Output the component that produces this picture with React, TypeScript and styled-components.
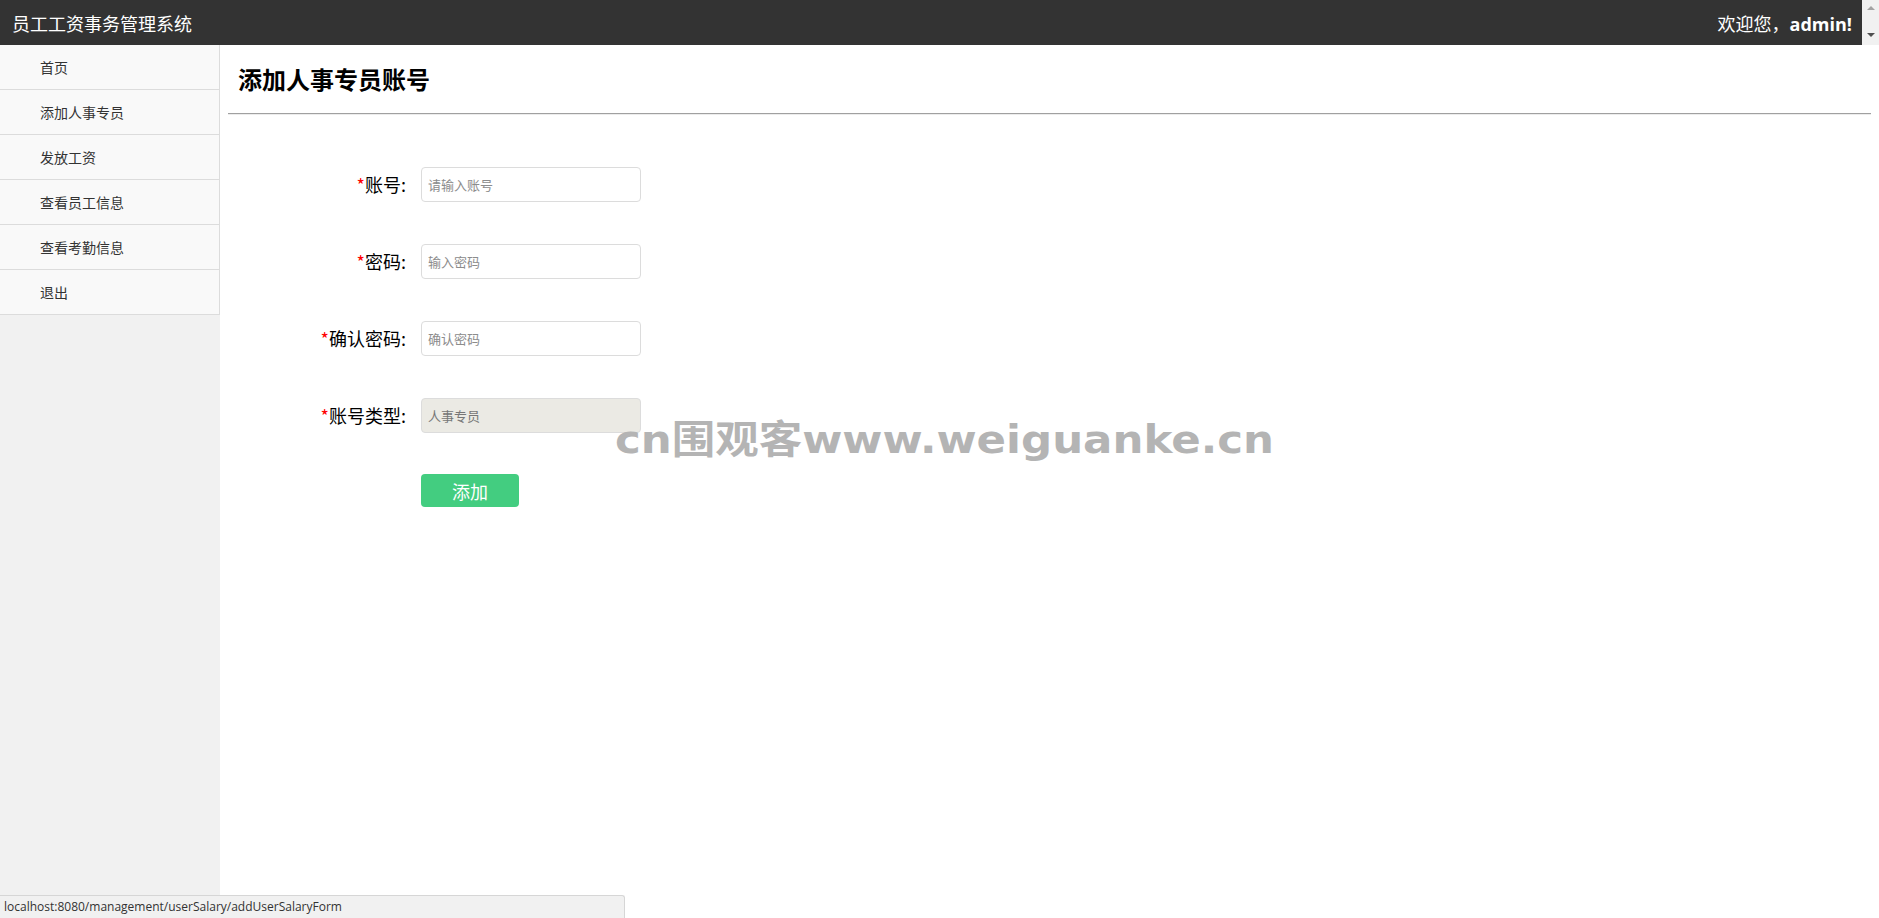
import React from "react";
import styled, { createGlobalStyle } from "styled-components";

const Global = createGlobalStyle`
  html, body { margin: 0; padding: 0; }
  body {
    font-family: "Noto Sans CJK SC", "Noto Sans", sans-serif;
    background: #fff;
    overflow: hidden;
  }
  #root { width: 1879px; height: 918px; }
`;

const Page = styled.div`
  position: relative;
  width: 1879px;
  height: 918px;
  display: grid;
  grid-template-rows: 45px 1fr;
  overflow: hidden;
`;

const Header = styled.header`
  display: flex;
  background: #333;
  height: 45px;
`;

const HeaderInner = styled.div`
  flex: 1;
  display: flex;
  align-items: center;
  justify-content: space-between;
  padding: 0 10px 0 12px;
  color: #fff;
  font-size: 18px;
`;

const Brand = styled.div`
  letter-spacing: 0;
`;

const Welcome = styled.div`
  b { font-weight: 700; font-family: "Open Sans", "Noto Sans CJK SC", sans-serif; }
`;

const ScrollBar = styled.div`
  width: 17px;
  background: #f1f1f1;
  display: flex;
  flex-direction: column;
  justify-content: space-between;
  align-items: center;
  padding: 6px 0 8px;
  box-sizing: border-box;
`;

const Arrow = styled.span<{ $up?: boolean; $color: string }>`
  width: 0;
  height: 0;
  border-left: 4px solid transparent;
  border-right: 4px solid transparent;
  ${(p) =>
    p.$up
      ? `border-bottom: 4px solid ${p.$color};`
      : `border-top: 4px solid ${p.$color};`}
`;

const Body = styled.div`
  display: grid;
  grid-template-columns: 220px 1fr;
  min-height: 0;
`;

const Sidebar = styled.nav`
  background: #f1f1f1;
  display: flex;
  flex-direction: column;
`;

const NavItem = styled.a`
  display: flex;
  align-items: center;
  height: 44px;
  padding-left: 40px;
  background: #f9f9f9;
  border-bottom: 1px solid #dcdcdc;
  border-right: 1px solid #dcdcdc;
  color: #333;
  font-size: 14px;
  text-decoration: none;
  cursor: pointer;
`;

const Main = styled.main`
  padding: 0 8px;
  background: #fff;
`;

const Title = styled.h2`
  margin: 0;
  padding: 20px 0 0 10px;
  height: 48px;
  font-size: 24px;
  font-weight: 700;
  line-height: 28px;
  color: #000;
`;

const Rule = styled.hr`
  margin: 0;
  border: 0;
  border-top: 1px solid #a0a0a0;
  border-bottom: 1px solid #ececec;
`;

const Form = styled.form`
  display: grid;
  grid-template-columns: 178px 220px;
  column-gap: 15px;
  row-gap: 42px;
  margin-top: 52px;
  align-items: center;
`;

const Label = styled.label`
  text-align: right;
  font-size: 18px;
  color: #000;
  line-height: 35px;
`;

const Star = styled.span`
  color: #f00;
`;

const Input = styled.input<{ $disabled?: boolean }>`
  box-sizing: border-box;
  width: 220px;
  height: 35px;
  border: 1px solid #dcdcdc;
  border-radius: 4px;
  padding: 0 6px;
  font-family: "Noto Sans CJK SC", sans-serif;
  font-size: 13px;
  color: #777;
  background: ${(p) => (p.$disabled ? "#ebeae4" : "#fff")};
  outline: none;
  &::placeholder { color: #8c8c8c; }
`;

const Button = styled.button`
  grid-column: 2;
  justify-self: start;
  width: 98px;
  height: 33px;
  margin-top: -1px;
  border: 0;
  border-radius: 4px;
  background: #43cd80;
  color: #fff;
  font-family: "Noto Sans CJK SC", sans-serif;
  font-size: 18px;
  cursor: pointer;
`;

const Watermark = styled.div`
  position: absolute;
  left: 615px;
  top: 416px;
  font-family: "DejaVu Sans", "Noto Sans CJK SC", sans-serif;
  font-weight: 700;
  font-size: 39px;
  line-height: 48px;
  color: #b4b4b4;
  white-space: nowrap;
  transform-origin: left top;
  transform: scaleX(1.115);
  pointer-events: none;
`;

const StatusBar = styled.div`
  position: absolute;
  left: 0;
  bottom: 0;
  width: 620px;
  height: 22px;
  background: #f1f1f1;
  border-top: 1px solid #d6d6d6;
  border-right: 1px solid #d6d6d6;
  border-top-right-radius: 3px;
  font-family: "Open Sans", "Noto Sans", sans-serif;
  font-size: 12px;
  line-height: 22px;
  color: #333;
  padding-left: 4px;
  box-sizing: content-box;
`;

const navItems = ["首页", "添加人事专员", "发放工资", "查看员工信息", "查看考勤信息", "退出"];

export default function App() {
  return (
    <>
      <Global />
      <Page>
        <Header>
          <HeaderInner>
            <Brand>员工工资事务管理系统</Brand>
            <Welcome>
              欢迎您，<b>admin!</b>
            </Welcome>
          </HeaderInner>
          <ScrollBar>
            <Arrow $up $color="#a3a3a3" />
            <Arrow $color="#505050" />
          </ScrollBar>
        </Header>
        <Body>
          <Sidebar>
            {navItems.map((t) => (
              <NavItem key={t}>{t}</NavItem>
            ))}
          </Sidebar>
          <Main>
            <Title>添加人事专员账号</Title>
            <Rule />
            <Form onSubmit={(e) => e.preventDefault()}>
              <Label>
                <Star>*</Star>账号:
              </Label>
              <Input placeholder="请输入账号" />
              <Label>
                <Star>*</Star>密码:
              </Label>
              <Input type="password" placeholder="输入密码" />
              <Label>
                <Star>*</Star>确认密码:
              </Label>
              <Input type="password" placeholder="确认密码" />
              <Label>
                <Star>*</Star>账号类型:
              </Label>
              <Input $disabled disabled value="人事专员" readOnly />
              <Button type="submit">添加</Button>
            </Form>
          </Main>
        </Body>
        <Watermark>cn围观客www.weiguanke.cn</Watermark>
        <StatusBar>localhost:8080/management/userSalary/addUserSalaryForm</StatusBar>
      </Page>
    </>
  );
}
